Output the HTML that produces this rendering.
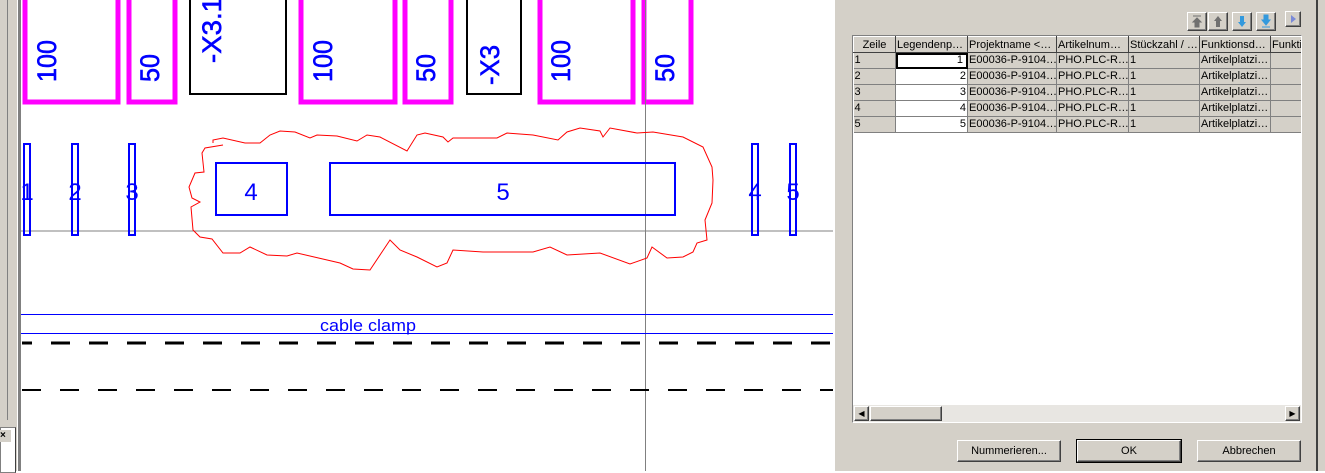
<!DOCTYPE html>
<html><head><meta charset="utf-8"><style>
body{margin:0;width:1325px;height:471px;overflow:hidden;background:#fff;position:relative;font-family:"Liberation Sans",Tahoma,sans-serif}
.abs{position:absolute}
.panel{left:835px;top:0;width:490px;height:471px;background:#d4d0c8}
.tb{position:absolute;top:12px;width:18px;height:17px;background:#d4d0c8;border:1px solid;border-color:#fff #404040 #404040 #fff;box-shadow:inset -1px -1px #808080}
table{border-collapse:collapse;font-size:11px;table-layout:fixed}
td{height:15px;padding:0 1px;white-space:nowrap;overflow:hidden;border-right:1px solid #808080;border-bottom:1px solid #808080;line-height:15px}
th{height:15px;font-weight:normal;padding:0 1px;text-align:left;white-space:nowrap;overflow:hidden;border:1px solid;border-color:#fff #404040 #404040 #fff;background:#d4d0c8}
.btn{position:absolute;top:440px;width:102px;height:20px;border:1px solid;border-color:#fff #404040 #404040 #fff;box-shadow:inset -1px -1px #808080;font-size:11px;text-align:center;line-height:20px}
</style></head><body>
<div class="abs" style="left:0;top:0;width:21px;height:471px;background:#d4d0c8"></div>
<div class="abs" style="left:7px;top:0;width:1px;height:420px;background:#808080"></div>
<div class="abs" style="left:17px;top:0;width:3px;height:471px;background:#808080;border-left:1px solid #fff"></div>
<div class="abs" style="left:0;top:427px;width:14px;height:44px;border:1px solid #808080;background:#fff;border-right-color:#404040"></div>
<div class="abs" style="left:0;top:430px;width:11px;height:12px;background:#d4d0c8;font-size:10px;font-weight:bold;line-height:12px">×</div>
<svg class="abs" style="left:0;top:0" width="835" height="471" font-family="Liberation Sans, sans-serif">
<g fill="none" stroke="#ff00ff" stroke-width="5">
<rect x="25" y="-10" width="93" height="112"/><rect x="129" y="-10" width="46" height="112"/>
<rect x="301" y="-10" width="94" height="112"/><rect x="405" y="-10" width="46" height="112"/>
<rect x="540" y="-10" width="93" height="112"/><rect x="644" y="-10" width="47" height="112"/>
</g>
<g fill="none" stroke="#000" stroke-width="2"><rect x="190" y="-5" width="96" height="99"/><rect x="467" y="-5" width="54" height="99"/></g>
<g fill="#0000ff" font-size="27" stroke="#0000ff" stroke-width="0.6" textLength="42">
<text transform="translate(56,82) rotate(-90)" textLength="42" lengthAdjust="spacingAndGlyphs">100</text>
<text transform="translate(159,82) rotate(-90)" textLength="28" lengthAdjust="spacingAndGlyphs">50</text>
<text transform="translate(221,63) rotate(-90)" textLength="66" lengthAdjust="spacingAndGlyphs">-X3.1</text>
<text transform="translate(332,82) rotate(-90)" textLength="42" lengthAdjust="spacingAndGlyphs">100</text>
<text transform="translate(435,82) rotate(-90)" textLength="28" lengthAdjust="spacingAndGlyphs">50</text>
<text transform="translate(499,85) rotate(-90)" textLength="40" lengthAdjust="spacingAndGlyphs">-X3</text>
<text transform="translate(570,82) rotate(-90)" textLength="42" lengthAdjust="spacingAndGlyphs">100</text>
<text transform="translate(674,82) rotate(-90)" textLength="28" lengthAdjust="spacingAndGlyphs">50</text>
</g>
<line x1="21" y1="231" x2="833" y2="231" stroke="#808080"/>
<line x1="645.5" y1="0" x2="645.5" y2="471" stroke="#808080"/>
<g fill="none" stroke="#0000ff" stroke-width="2">
<rect x="24" y="144" width="6" height="91"/><rect x="72" y="144" width="6" height="91"/><rect x="129" y="144" width="6" height="91"/>
<rect x="752" y="144" width="6" height="91"/><rect x="790" y="144" width="6" height="91"/>
<rect x="216" y="163" width="71" height="52"/><rect x="330" y="163" width="345" height="52"/>
</g>
<g fill="#0000ff" font-size="24" text-anchor="middle">
<text x="27" y="200">1</text><text x="75" y="200">2</text><text x="132" y="200">3</text>
<text x="755" y="200">4</text><text x="793" y="200">5</text>
<text x="251" y="200">4</text><text x="503" y="200">5</text>
</g>
<polyline fill="none" stroke="#ff0000" stroke-width="1" points="213,143 213,140 223,138 245,143 260,143 270,135 280,131 295,132 310,138 317,135 337,136 357,141 367,135 380,137 407,151 417,135 425,133 443,137 448,142 453,138 497,138 507,133 533,135 558,140 567,132 580,128 600,131 603,137 610,128 637,133 653,132 683,137 703,147 712,167 713,180 712,203 705,220 707,240 697,243 693,252 683,257 667,258 652,247 647,258 630,264 600,253 567,255 550,247 533,252 483,252 453,250 447,263 437,267 417,257 400,250 390,240 370,270 353,269 340,263 297,253 287,256 267,255 250,247 240,253 223,253 212,239 200,237 193,230 191,207 200,202 192,198 189,187 195,173 204,172 202,153 205,148 223,145"/>
<line x1="21" y1="314.5" x2="833" y2="314.5" stroke="#0000ff"/>
<line x1="21" y1="333.5" x2="833" y2="333.5" stroke="#0000ff"/>
<text x="368" y="331" fill="#0000ff" font-size="17" text-anchor="middle" textLength="96" lengthAdjust="spacingAndGlyphs">cable clamp</text>
<line x1="22" y1="343" x2="833" y2="343" stroke="#000" stroke-width="3" stroke-dasharray="19 19" stroke-dashoffset="9"/>
<line x1="22" y1="390" x2="833" y2="390" stroke="#000" stroke-width="2" stroke-dasharray="19 19"/>
</svg>
<div class="abs panel"></div>
<div class="abs" style="left:1316px;top:0;width:2px;height:471px;background:#404040"></div>
<div class="tb" style="left:1187px"><svg width="18" height="17"><path d="M5 3h8M9 5l-4 4h2v5h4v-5h2z" fill="#707070" stroke="#707070" stroke-width="1"/></svg></div>
<div class="tb" style="left:1208px"><svg width="18" height="17"><path d="M9 3l-4 5h2v6h4v-6h2z" fill="#707070"/></svg></div>
<div class="tb" style="left:1232px"><svg width="18" height="17"><path d="M9 14l-4 -5h2v-6h4v6h2z" fill="#3399dd"/></svg></div>
<div class="tb" style="left:1256px"><svg width="18" height="17"><path d="M9 12l-4 -5h2v-5h4v5h2z M5 14h8" fill="#3399dd" stroke="#3399dd"/></svg></div>
<div class="tb" style="left:1285px;top:11px;width:14px;height:14px"><svg width="14" height="14"><path d="M5 3l5 4-5 4z" fill="#7a8ad8"/></svg></div>
<div class="abs" style="left:852px;top:35px;width:448px;height:386px;background:#fff;border:1px solid;border-color:#808080 #fff #fff #808080;overflow:hidden">
<table style="width:460px">
<colgroup><col style="width:42px"><col style="width:72px"><col style="width:89px"><col style="width:72px"><col style="width:71px"><col style="width:71px"><col style="width:43px"></colgroup>
<tr><th style="text-align:center">Zeile</th><th>Legendenp…</th><th>Projektname &lt;…</th><th>Artikelnum…</th><th>Stückzahl / …</th><th>Funktionsd…</th><th>Funkti</th></tr>
<tr><td style="background:#d4d0c8">1</td><td style="text-align:right;outline:2px solid #000;outline-offset:-2px">1&nbsp;</td><td style="background:#d4d0c8">E00036-P-9104…</td><td style="background:#d4d0c8">PHO.PLC-R…</td><td style="background:#d4d0c8">1</td><td style="background:#d4d0c8">Artikelplatzi…</td><td style="background:#d4d0c8"></td></tr>
<tr><td style="background:#d4d0c8">2</td><td style="text-align:right">2</td><td style="background:#d4d0c8">E00036-P-9104…</td><td style="background:#d4d0c8">PHO.PLC-R…</td><td style="background:#d4d0c8">1</td><td style="background:#d4d0c8">Artikelplatzi…</td><td style="background:#d4d0c8"></td></tr>
<tr><td style="background:#d4d0c8">3</td><td style="text-align:right">3</td><td style="background:#d4d0c8">E00036-P-9104…</td><td style="background:#d4d0c8">PHO.PLC-R…</td><td style="background:#d4d0c8">1</td><td style="background:#d4d0c8">Artikelplatzi…</td><td style="background:#d4d0c8"></td></tr>
<tr><td style="background:#d4d0c8">4</td><td style="text-align:right">4</td><td style="background:#d4d0c8">E00036-P-9104…</td><td style="background:#d4d0c8">PHO.PLC-R…</td><td style="background:#d4d0c8">1</td><td style="background:#d4d0c8">Artikelplatzi…</td><td style="background:#d4d0c8"></td></tr>
<tr><td style="background:#d4d0c8">5</td><td style="text-align:right">5</td><td style="background:#d4d0c8">E00036-P-9104…</td><td style="background:#d4d0c8">PHO.PLC-R…</td><td style="background:#d4d0c8">1</td><td style="background:#d4d0c8">Artikelplatzi…</td><td style="background:#d4d0c8"></td></tr>
</table>
<div class="abs" style="left:0;top:369px;width:448px;height:17px;background:#e8e6e2"></div>
<div class="tb" style="left:1px;top:370px;width:13px;height:13px;font-size:8px;text-align:center;line-height:13px">◀</div>
<div class="tb" style="left:17px;top:370px;width:70px;height:13px"></div>
<div class="tb" style="left:432px;top:370px;width:13px;height:13px;font-size:8px;text-align:center;line-height:13px">▶</div>
</div>
<div class="btn" style="left:957px">Nummerieren...</div>
<div class="btn" style="left:1077px;outline:1px solid #000">OK</div>
<div class="btn" style="left:1197px">Abbrechen</div>
</body></html>
